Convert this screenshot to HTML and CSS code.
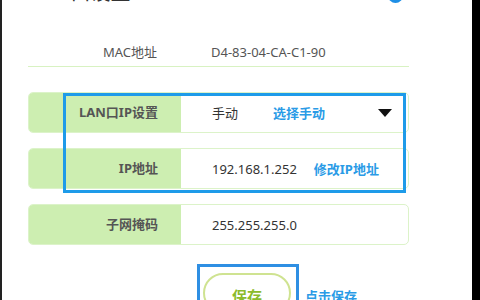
FILE: index.html
```html
<!DOCTYPE html>
<html>
<head>
	<meta charset="UTF-8">
	<title>LAN口设置</title>
	<link rel="stylesheet" href="styles.css">
</head>
<body>
	<div class="screen">
		<div class="panel">
			<!-- 标题（上半部分被截掉） -->
			<h2 class="title"><span>LAN口设置</span><i class="help"></i></h2>
			<div class="mac-row">
				<span class="mac-label">MAC地址</span>
				<span class="mac-value">D4-83-04-CA-C1-90</span>
			</div>
			<div class="form">
				<div class="mark-rows"></div>
				<div class="field">
					<div class="label">LAN口IP设置</div>
					<div class="value">手动<span class="note note-mode">选择手动</span><i class="arrow"></i></div>
				</div>
				<div class="field">
					<div class="label">IP地址</div>
					<div class="value">192.168.1.252<span class="note note-ip">修改IP地址</span></div>
				</div>
				<div class="field">
					<div class="label">子网掩码</div>
					<div class="value">255.255.255.0</div>
				</div>
			</div>
			<div class="actions">
				<div class="mark-save"><button class="save">保存</button></div>
				<span class="note note-save">点击保存</span>
			</div>
		</div>
		<div class="edge"></div>
	</div>
</body>
</html>
```

FILE: styles.css
```css
body{margin:0;padding:0;background:#fff;font-family:"Noto Sans","Noto Sans CJK SC",sans-serif;font-size:13px;color:#333;}
.screen{display:flex;width:480px;height:300px;overflow:hidden;}
.panel{flex:1;border-left:2px solid #222;padding-left:26px;background:#fff;}
.edge{width:8px;background:#000;}

.title{display:flex;justify-content:space-between;align-items:center;width:375px;margin:-19px 0 0;height:24px;font-size:20px;line-height:24px;font-weight:normal;color:#333;}
.title span{margin-left:4px;}
.help{display:block;align-self:flex-end;width:15px;height:15px;margin-bottom:2px;border-radius:50%;background:#1e8fe6;}

.mac-row{display:flex;align-items:center;width:381px;height:29px;margin-top:32px;border-bottom:1px solid #d8f2c2;color:#555;}
.mac-label{width:129px;text-align:right;}
.mac-value{margin-left:54px;}

.form{position:relative;margin-top:25px;width:381px;display:flex;flex-direction:column;gap:15px;}
.field{display:flex;height:41px;box-sizing:border-box;border:1px solid #dcf3c9;border-radius:5px;overflow:hidden;}
.label{width:152px;box-sizing:border-box;padding-right:23px;background:#cdeeb1;text-align:right;line-height:39px;font-weight:bold;color:#555;}
.value{flex:1;display:flex;align-items:center;padding-left:31px;color:#333;}
.arrow{width:0;height:0;margin-left:auto;margin-right:16px;border-left:7px solid transparent;border-right:7px solid transparent;border-top:8px solid #111;}

.note{color:#2a9be6;font-weight:bold;}
.note-mode{margin-left:35px;}
.note-ip{margin-left:17px;}
.note-save{margin-left:6px;margin-top:22px;}

.mark-rows{position:absolute;left:35px;top:1px;width:343px;height:100px;box-sizing:border-box;border:3px solid #1e9be9;pointer-events:none;}

.actions{display:flex;align-items:flex-start;margin-top:19px;padding-left:169px;}
.mark-save{width:102px;height:50px;box-sizing:border-box;border:3px solid #2f8fe3;padding:6px 0 0 3px;}
.save{display:block;width:88px;height:40px;border:2px solid #cfe391;border-radius:20px;background:#fff;color:#8cbb2c;font-family:"Noto Sans CJK SC",sans-serif;font-size:15px;font-weight:bold;padding:4px 0 0;}
```
